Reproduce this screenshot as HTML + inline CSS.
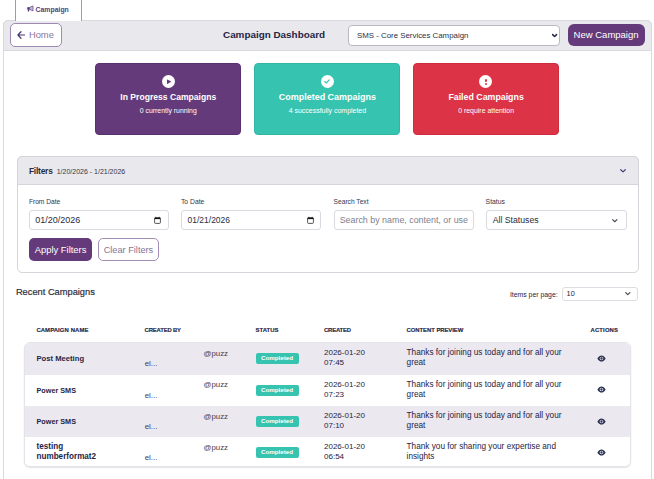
<!DOCTYPE html>
<html><head><meta charset="utf-8">
<style>
*{box-sizing:border-box;margin:0;padding:0}
html,body{width:654px;height:479px;overflow:hidden;background:#fff}
body{font-family:"Liberation Sans",sans-serif;position:relative;color:#1f2444}
.a{position:absolute}
.t{white-space:nowrap;line-height:1}
.b{position:absolute;box-sizing:border-box}
</style></head><body>
<div class="b" style="left:3px;top:20px;width:649px;height:480px;border:1px solid #d8d8df;border-radius:5px 5px 0 0;background:#fff"></div>
<div class="b" style="left:3px;top:20px;width:649px;height:30.6px;border:1px solid #d8d8df;border-radius:5px 5px 0 0;background:#e8e8ed"></div>
<div class="b" style="left:15px;top:-5px;width:67px;height:26px;border:1px solid #a995bb;border-bottom:none;border-radius:5px 5px 0 0;background:#fff"></div>
<svg class="a" style="left:27.3px;top:5.2px" width="7" height="7" viewBox="0 0 70 70"><rect x="3" y="22" width="24" height="24" fill="#4b2f72"/><rect x="8" y="44" width="14" height="20" rx="3" fill="#4b2f72"/><path d="M27 24L60 9V59L27 44Z" fill="#c9bddb" stroke="#5a3f80" stroke-width="7" stroke-linejoin="round"/></svg>
<div class="a t" style="left:35.5px;top:6.84px;font-size:6.9px;font-weight:bold;color:#54427a;">Campaign</div>
<div class="b" style="left:10px;top:23px;width:51.5px;height:23.5px;border:1px solid #a08ab4;border-radius:5px;background:#fff"></div>
<svg class="a" style="left:16.5px;top:31px" width="8.5" height="8" viewBox="0 0 17 16"><path d="M15.5 8H2M8 1.5L1.8 8L8 14.5" fill="none" stroke="#4a356c" stroke-width="2.4" stroke-linecap="round" stroke-linejoin="round"/></svg>
<div class="a t" style="left:28.9px;top:30.24px;font-size:9.4px;font-weight:normal;color:#8a789f;">Home</div>
<div class="a t" style="left:223px;top:29.96px;font-size:9.9px;font-weight:bold;color:#1f2444;">Campaign Dashboard</div>
<div class="b" style="left:348px;top:24.5px;width:211.5px;height:21px;border:1px solid #b9b9c4;border-radius:4px;background:#fff"></div>
<div class="a t" style="left:357px;top:31.59px;font-size:7.87px;font-weight:normal;color:#2a2f4a;">SMS - Core Services Campaign</div>
<svg class="a" style="left:551.90px;top:33.84px;overflow:visible" width="5.2" height="3.12" viewBox="0 0 10 6"><path d="M1.2 1.2L5 4.8L8.8 1.2" fill="none" stroke="#1f2444" stroke-width="2.8" stroke-linecap="round" stroke-linejoin="round"/></svg>
<div class="b" style="left:568px;top:23.5px;width:77px;height:22.8px;border-radius:6px;background:#653a7a"></div>
<div class="a t" style="left:573.6px;top:29.87px;font-size:9.51px;font-weight:normal;color:#fff;">New Campaign</div>
<div class="b" style="left:95.2px;top:62.8px;width:146.2px;height:72.2px;border-radius:4px;background:#653a7a;border:1px solid #5a306e"></div>
<div class="a t" style="left:95.2px;width:146.2px;text-align:center;top:92.89px;font-size:8.59px;font-weight:bold;color:#fff">In Progress Campaigns</div>
<div class="a t" style="left:95.2px;width:146.2px;text-align:center;top:107.65px;font-size:6.88px;color:#fff">0 currently running</div>
<div class="b" style="left:161.60px;top:74.8px;width:13px;height:13px;border-radius:50%;background:#fff"></div>
<svg class="a" style="left:165.80px;top:78.6px" width="5.4" height="5.4" viewBox="0 0 10 10"><path d="M1.8 1.2Q1.8 0.4 2.6 0.8L8.8 4.4Q9.6 5 8.8 5.6L2.6 9.2Q1.8 9.6 1.8 8.8Z" fill="#653a7a"/></svg>
<div class="b" style="left:254.3px;top:62.8px;width:146.2px;height:72.2px;border-radius:4px;background:#36c4b1;border:1px solid #2fb6a4"></div>
<div class="a t" style="left:254.3px;width:146.2px;text-align:center;top:92.67px;font-size:8.99px;font-weight:bold;color:#fff">Completed Campaigns</div>
<div class="a t" style="left:254.3px;width:146.2px;text-align:center;top:107.60px;font-size:6.97px;color:#fff">4 successfully completed</div>
<div class="b" style="left:320.70px;top:74.8px;width:13px;height:13px;border-radius:50%;background:#fff"></div>
<svg class="a" style="left:324.20px;top:79px" width="6" height="5" viewBox="0 0 12 10"><path d="M1.5 5L4.5 8L10.5 1.8" fill="none" stroke="#36c4b1" stroke-width="2.2" stroke-linecap="round" stroke-linejoin="round"/></svg>
<div class="b" style="left:413px;top:62.8px;width:146.2px;height:72.2px;border-radius:4px;background:#dc3446;border:1px solid #cf2c3e"></div>
<div class="a t" style="left:413px;width:146.2px;text-align:center;top:92.76px;font-size:8.82px;font-weight:bold;color:#fff">Failed Campaigns</div>
<div class="a t" style="left:413px;width:146.2px;text-align:center;top:107.61px;font-size:6.95px;color:#fff">0 require attention</div>
<div class="b" style="left:479.40px;top:74.8px;width:13px;height:13px;border-radius:50%;background:#fff"></div>
<div class="b" style="left:485.25px;top:78.6px;width:1.3px;height:3.8px;background:#dc3446;border-radius:1px"></div>
<div class="b" style="left:485.25px;top:83.3px;width:1.3px;height:1.4px;background:#dc3446;border-radius:1px"></div>
<div class="b" style="left:16.5px;top:156.3px;width:622px;height:117.2px;border:1px solid #d5d5dc;border-radius:5px;background:#fff"></div>
<div class="b" style="left:16.5px;top:156.3px;width:622px;height:28.4px;border:1px solid #d5d5dc;border-radius:5px 5px 0 0;background:#e8e8ed"></div>
<div class="a t" style="left:28.9px;top:167.00px;font-size:8.4px;font-weight:bold;color:#2a2d40;letter-spacing:-0.2px;">Filters</div>
<div class="a t" style="left:56.7px;top:167.87px;font-size:7.01px;font-weight:normal;color:#343748;">1/20/2026 - 1/21/2026</div>
<svg class="a" style="left:619.50px;top:169.20px;overflow:visible" width="6" height="3.60" viewBox="0 0 10 6"><path d="M1.2 1.2L5 4.8L8.8 1.2" fill="none" stroke="#4b3a78" stroke-width="2.0" stroke-linecap="round" stroke-linejoin="round"/></svg>
<div class="a t" style="left:28.9px;top:198.88px;font-size:6.65px;font-weight:normal;color:#33354a;">From Date</div>
<div class="a t" style="left:181px;top:198.81px;font-size:6.76px;font-weight:normal;color:#33354a;">To Date</div>
<div class="a t" style="left:333.6px;top:198.88px;font-size:6.65px;font-weight:normal;color:#33354a;">Search Text</div>
<div class="a t" style="left:485.6px;top:198.77px;font-size:6.84px;font-weight:normal;color:#33354a;">Status</div>
<div class="b" style="left:29px;top:210.2px;width:140px;height:19.4px;border:1px solid #dadae1;border-radius:3px;background:#fff"></div>
<div class="b" style="left:181.3px;top:210.2px;width:140px;height:19.4px;border:1px solid #dadae1;border-radius:3px;background:#fff"></div>
<div class="b" style="left:333.6px;top:210.2px;width:140px;height:19.4px;border:1px solid #dadae1;border-radius:3px;background:#fff"></div>
<div class="b" style="left:486px;top:210.2px;width:140.5px;height:19.4px;border:1px solid #dadae1;border-radius:3px;background:#fff"></div>
<div class="a t" style="left:35.2px;top:215.67px;font-size:8.99px;font-weight:normal;color:#2a2c3c;">01/20/2026</div>
<div class="a t" style="left:187.6px;top:215.96px;font-size:8.47px;font-weight:normal;color:#2a2c3c;">01/21/2026</div>
<div class="a" style="left:339.7px;top:212px;width:128px;height:18px;overflow:hidden"><div class="a t" style="left:0;top:3.72px;font-size:8.9px;color:#7d808e">Search by name, content, or users</div></div>
<div class="a t" style="left:492.7px;top:215.82px;font-size:8.71px;font-weight:normal;color:#2a2c3c;">All Statuses</div>
<svg class="a" style="left:154px;top:216px" width="7" height="8" viewBox="0 0 70 80"><rect x="6" y="18" width="58" height="56" rx="9" fill="none" stroke="#111" stroke-width="7"/><rect x="6" y="16" width="58" height="15" fill="#111"/><rect x="15" y="8" width="7" height="10" fill="#111"/><rect x="48" y="8" width="7" height="10" fill="#111"/></svg>
<svg class="a" style="left:306.5px;top:216px" width="7" height="8" viewBox="0 0 70 80"><rect x="6" y="18" width="58" height="56" rx="9" fill="none" stroke="#111" stroke-width="7"/><rect x="6" y="16" width="58" height="15" fill="#111"/><rect x="15" y="8" width="7" height="10" fill="#111"/><rect x="48" y="8" width="7" height="10" fill="#111"/></svg>
<svg class="a" style="left:612.40px;top:218.52px;overflow:visible" width="5.6" height="3.36" viewBox="0 0 10 6"><path d="M1.2 1.2L5 4.8L8.8 1.2" fill="none" stroke="#4a4d5a" stroke-width="2.2" stroke-linecap="round" stroke-linejoin="round"/></svg>
<div class="b" style="left:29px;top:238px;width:63.2px;height:22.8px;border-radius:5px;background:#653a7a"></div>
<div class="a t" style="left:34.7px;top:244.82px;font-size:9.42px;font-weight:normal;color:#fff;">Apply Filters</div>
<div class="b" style="left:97.8px;top:238px;width:61.2px;height:22.8px;border-radius:5px;border:1px solid #a48eb6;background:#fff"></div>
<div class="a t" style="left:103.7px;top:245.85px;font-size:9.2px;font-weight:normal;color:#857599;">Clear Filters</div>
<div class="a t" style="left:15.9px;top:287.90px;font-size:9.29px;font-weight:normal;color:#2c2f42;-webkit-text-stroke:0.2px #2c2f42;">Recent Campaigns</div>
<div class="a t" style="left:509.9px;top:291.65px;font-size:6.88px;font-weight:normal;color:#1f2444;">Items per page:</div>
<div class="b" style="left:562.4px;top:286.5px;width:75.5px;height:14.5px;border:1px solid #dcdce3;border-radius:3px;background:#fff"></div>
<div class="a t" style="left:566.6px;top:289.61px;font-size:7.3px;font-weight:normal;color:#1f2444;">10</div>
<svg class="a" style="left:625.10px;top:292.32px;overflow:visible" width="5.6" height="3.36" viewBox="0 0 10 6"><path d="M1.2 1.2L5 4.8L8.8 1.2" fill="none" stroke="#444652" stroke-width="2.1" stroke-linecap="round" stroke-linejoin="round"/></svg>
<div class="a t" style="left:36.4px;top:327.70px;font-size:5.9px;font-weight:bold;color:#1f2444;letter-spacing:0.11px;-webkit-text-stroke:0.15px #1f2444;">CAMPAIGN NAME</div>
<div class="a t" style="left:144.6px;top:327.70px;font-size:5.9px;font-weight:bold;color:#1f2444;letter-spacing:-0.16px;-webkit-text-stroke:0.15px #1f2444;">CREATED BY</div>
<div class="a t" style="left:255.6px;top:327.70px;font-size:5.9px;font-weight:bold;color:#1f2444;letter-spacing:0.04px;-webkit-text-stroke:0.15px #1f2444;">STATUS</div>
<div class="a t" style="left:324px;top:327.70px;font-size:5.9px;font-weight:bold;color:#1f2444;letter-spacing:-0.17px;-webkit-text-stroke:0.15px #1f2444;">CREATED</div>
<div class="a t" style="left:406.6px;top:327.70px;font-size:5.9px;font-weight:bold;color:#1f2444;letter-spacing:-0.04px;-webkit-text-stroke:0.15px #1f2444;">CONTENT PREVIEW</div>
<div class="a t" style="left:590.5px;top:327.70px;font-size:5.9px;font-weight:bold;color:#1f2444;letter-spacing:0.16px;-webkit-text-stroke:0.15px #1f2444;">ACTIONS</div>
<div class="b" style="left:24px;top:342px;width:607.3px;height:125px;border:1px solid #e3e3e9;border-radius:6px;overflow:hidden;background:#fff;box-shadow:0 1px 1.5px rgba(30,30,60,0.12)">
<div class="a" style="left:0;width:610px;top:0.00px;height:31.5px;background:#ebe8f0"></div>
<div class="a" style="left:0;width:610px;top:31.50px;height:31.5px;background:#fff"></div>
<div class="a" style="left:0;width:610px;top:62.80px;height:31px;background:#ebe8f0"></div>
<div class="a" style="left:0;width:610px;top:93.80px;height:31.5px;background:#fff"></div>
</div>
<div class="a t" style="left:36.5px;top:355.02px;font-size:7.65px;font-weight:bold;color:#1f2444;">Post Meeting</div>
<div class="a t" style="left:203.6px;top:349.73px;font-size:7.8px;font-weight:normal;color:#3c4058;">@puzz</div>
<div class="a t" style="left:144.7px;top:360.05px;font-size:7.94px;font-weight:normal;color:#3c4058;">el...</div>
<div class="b" style="left:255.6px;top:353.00px;width:43.4px;height:11.2px;border-radius:2px;background:#36c4b1"></div>
<div class="a t" style="left:261px;top:355.33px;font-size:6.19px;font-weight:bold;color:#fff;">Completed</div>
<div class="a t" style="left:324px;top:349.11px;font-size:8.02px;font-weight:normal;color:#1f2444;">2026-01-20</div>
<div class="a t" style="left:324px;top:359.11px;font-size:8.02px;font-weight:normal;color:#1f2444;">07:45</div>
<div class="a t" style="left:406.6px;top:349.19px;font-size:8.23px;font-weight:normal;color:#1f2444;">Thanks for joining us today and for all your</div>
<div class="a t" style="left:406.6px;top:359.49px;font-size:8.23px;font-weight:normal;color:#1f2444;">great</div>
<svg class="a" style="left:597.00px;top:354.90px" width="9" height="7" viewBox="0 0 18 14"><path d="M0.8 7C3.2 2.6 5.8 0.8 9 0.8S14.8 2.6 17.2 7C14.8 11.4 12.2 13.2 9 13.2S3.2 11.4 0.8 7Z" fill="#2a3050"/><circle cx="9" cy="7" r="3.6" fill="#ebe8f0"/><circle cx="9" cy="7" r="2.3" fill="#2a3050"/></svg>
<div class="a t" style="left:36.5px;top:386.74px;font-size:7.25px;font-weight:bold;color:#1f2444;">Power SMS</div>
<div class="a t" style="left:203.6px;top:381.23px;font-size:7.8px;font-weight:normal;color:#3c4058;">@puzz</div>
<div class="a t" style="left:144.7px;top:391.55px;font-size:7.94px;font-weight:normal;color:#3c4058;">el...</div>
<div class="b" style="left:255.6px;top:384.50px;width:43.4px;height:11.2px;border-radius:2px;background:#36c4b1"></div>
<div class="a t" style="left:261px;top:386.83px;font-size:6.19px;font-weight:bold;color:#fff;">Completed</div>
<div class="a t" style="left:324px;top:380.61px;font-size:8.02px;font-weight:normal;color:#1f2444;">2026-01-20</div>
<div class="a t" style="left:324px;top:390.61px;font-size:8.02px;font-weight:normal;color:#1f2444;">07:23</div>
<div class="a t" style="left:406.6px;top:380.69px;font-size:8.23px;font-weight:normal;color:#1f2444;">Thanks for joining us today and for all your</div>
<div class="a t" style="left:406.6px;top:390.99px;font-size:8.23px;font-weight:normal;color:#1f2444;">great</div>
<svg class="a" style="left:597.00px;top:386.40px" width="9" height="7" viewBox="0 0 18 14"><path d="M0.8 7C3.2 2.6 5.8 0.8 9 0.8S14.8 2.6 17.2 7C14.8 11.4 12.2 13.2 9 13.2S3.2 11.4 0.8 7Z" fill="#2a3050"/><circle cx="9" cy="7" r="3.6" fill="#fff"/><circle cx="9" cy="7" r="2.3" fill="#2a3050"/></svg>
<div class="a t" style="left:36.5px;top:418.04px;font-size:7.25px;font-weight:bold;color:#1f2444;">Power SMS</div>
<div class="a t" style="left:203.6px;top:412.53px;font-size:7.8px;font-weight:normal;color:#3c4058;">@puzz</div>
<div class="a t" style="left:144.7px;top:422.85px;font-size:7.94px;font-weight:normal;color:#3c4058;">el...</div>
<div class="b" style="left:255.6px;top:415.80px;width:43.4px;height:11.2px;border-radius:2px;background:#36c4b1"></div>
<div class="a t" style="left:261px;top:418.13px;font-size:6.19px;font-weight:bold;color:#fff;">Completed</div>
<div class="a t" style="left:324px;top:411.91px;font-size:8.02px;font-weight:normal;color:#1f2444;">2026-01-20</div>
<div class="a t" style="left:324px;top:421.91px;font-size:8.02px;font-weight:normal;color:#1f2444;">07:10</div>
<div class="a t" style="left:406.6px;top:411.99px;font-size:8.23px;font-weight:normal;color:#1f2444;">Thanks for joining us today and for all your</div>
<div class="a t" style="left:406.6px;top:422.29px;font-size:8.23px;font-weight:normal;color:#1f2444;">great</div>
<svg class="a" style="left:597.00px;top:417.70px" width="9" height="7" viewBox="0 0 18 14"><path d="M0.8 7C3.2 2.6 5.8 0.8 9 0.8S14.8 2.6 17.2 7C14.8 11.4 12.2 13.2 9 13.2S3.2 11.4 0.8 7Z" fill="#2a3050"/><circle cx="9" cy="7" r="3.6" fill="#ebe8f0"/><circle cx="9" cy="7" r="2.3" fill="#2a3050"/></svg>
<div class="a t" style="left:36.5px;top:442.84px;font-size:8.14px;font-weight:bold;color:#1f2444;">testing</div>
<div class="a t" style="left:36.5px;top:453.34px;font-size:8.14px;font-weight:bold;color:#1f2444;">numberformat2</div>
<div class="a t" style="left:203.6px;top:443.53px;font-size:7.8px;font-weight:normal;color:#3c4058;">@puzz</div>
<div class="a t" style="left:144.7px;top:453.85px;font-size:7.94px;font-weight:normal;color:#3c4058;">el...</div>
<div class="b" style="left:255.6px;top:446.80px;width:43.4px;height:11.2px;border-radius:2px;background:#36c4b1"></div>
<div class="a t" style="left:261px;top:449.13px;font-size:6.19px;font-weight:bold;color:#fff;">Completed</div>
<div class="a t" style="left:324px;top:442.91px;font-size:8.02px;font-weight:normal;color:#1f2444;">2026-01-20</div>
<div class="a t" style="left:324px;top:452.91px;font-size:8.02px;font-weight:normal;color:#1f2444;">06:54</div>
<div class="a t" style="left:406.6px;top:442.99px;font-size:8.23px;font-weight:normal;color:#1f2444;">Thank you for sharing your expertise and</div>
<div class="a t" style="left:406.6px;top:453.29px;font-size:8.23px;font-weight:normal;color:#1f2444;">insights</div>
<svg class="a" style="left:597.00px;top:448.70px" width="9" height="7" viewBox="0 0 18 14"><path d="M0.8 7C3.2 2.6 5.8 0.8 9 0.8S14.8 2.6 17.2 7C14.8 11.4 12.2 13.2 9 13.2S3.2 11.4 0.8 7Z" fill="#2a3050"/><circle cx="9" cy="7" r="3.6" fill="#fff"/><circle cx="9" cy="7" r="2.3" fill="#2a3050"/></svg>
</body></html>
